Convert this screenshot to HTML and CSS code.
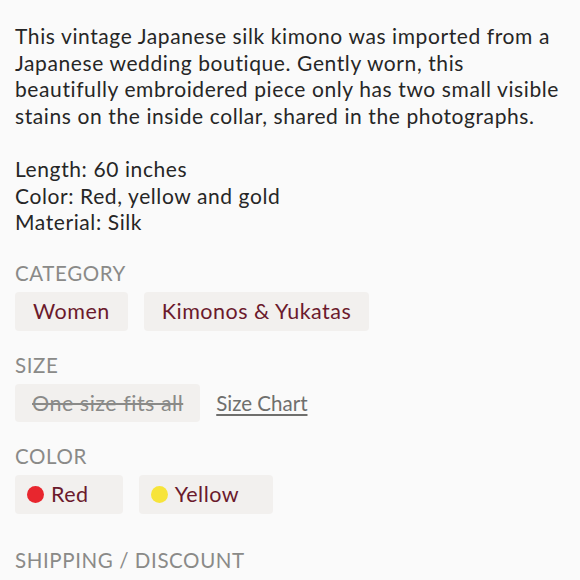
FILE: index.html
```html
<!DOCTYPE html>
<html>
<head>
<meta charset="utf-8">
<link rel="stylesheet" href="styles.css">
</head>
<body>
<div class="page">
  <p class="desc">This vintage Japanese silk kimono was imported from a Japanese wedding boutique. Gently worn, this beautifully embroidered piece only has two small visible stains on the inside collar, shared in the photographs.</p>
  <p class="specs">Length: 60 inches<br>Color: Red, yellow and gold<br>Material: Silk</p>

  <section class="group group-category">
    <h3 class="label">CATEGORY</h3>
    <div class="chips">
      <span class="chip">Women</span>
      <span class="chip">Kimonos &amp; Yukatas</span>
    </div>
  </section>

  <section class="group">
    <h3 class="label">SIZE</h3>
    <div class="chips">
      <span class="chip chip-size">One size fits all</span>
      <a class="size-chart">Size Chart</a>
    </div>
  </section>

  <section class="group">
    <h3 class="label">COLOR</h3>
    <div class="chips">
      <span class="chip chip-color"><span class="dot dot-red"></span>Red</span>
      <span class="chip chip-color"><span class="dot dot-yellow"></span>Yellow</span>
    </div>
  </section>

  <section class="group group-shipping">
    <h3 class="label">SHIPPING / DISCOUNT</h3>
  </section>
</div>
</body>
</html>
```

FILE: styles.css
```css
html, body {
  margin: 0;
  padding: 0;
  background: #fafafa;
}
body {
  font-family: "Lato", "Noto Sans", sans-serif;
  color: #262626;
}
.page {
  padding: 23px 15px 0 15px;
  width: 550px;
}
.desc, .specs {
  margin: 0;
  font-size: 21px;
  line-height: 26.6px;
  letter-spacing: 0.6px;
}
.specs {
  margin-top: 26.6px;
}
.group {
  margin-top: 22px;
}
.group-category {
  margin-top: 25px;
}
.label {
  margin: 0;
  font-size: 20.5px;
  font-weight: 400;
  color: #8a8a88;
  line-height: 24px;
  letter-spacing: 0.6px;
}
.chips {
  display: flex;
  align-items: center;
  gap: 16px;
  margin-top: 7px;
}
.chip {
  display: inline-flex;
  align-items: center;
  height: 39px;
  padding: 0 18px;
  background: #f2f0ee;
  border-radius: 4px;
  font-size: 21.5px;
  letter-spacing: 0.5px;
  color: #6b1a2c;
}
.chip-size {
  color: #8a8a88;
  text-decoration: line-through;
  height: 38px;
  padding: 0 17px;
}
.size-chart {
  color: #6f6f6d;
  font-size: 20.5px;
  letter-spacing: 0;
  text-decoration: underline;
  text-underline-offset: 3px;
}
.chip-color {
  padding: 0 34px 0 12px;
}
.dot {
  width: 17px;
  height: 17px;
  border-radius: 50%;
  margin-right: 7px;
}
.dot-red { background: #e8262e; }
.dot-yellow { background: #f7e43a; }
.group-shipping {
  margin-top: 34px;
}
```
